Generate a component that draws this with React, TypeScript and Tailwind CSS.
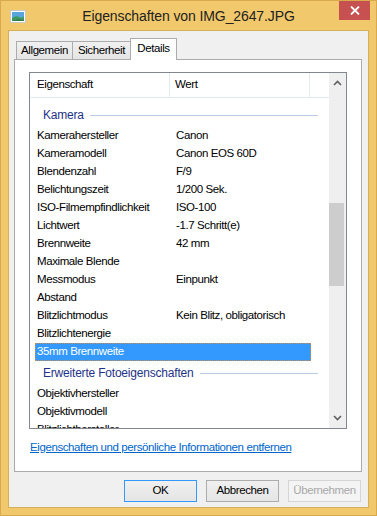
import React from "react";

const FONT = { fontFamily: '"Liberation Sans", Arial, sans-serif' };

type Row = { k: string; v?: string; selected?: boolean };

const KAMERA: Row[] = [
  { k: "Kamerahersteller", v: "Canon" },
  { k: "Kameramodell", v: "Canon EOS 60D" },
  { k: "Blendenzahl", v: "F/9" },
  { k: "Belichtungszeit", v: "1/200 Sek." },
  { k: "ISO-Filmempfindlichkeit", v: "ISO-100" },
  { k: "Lichtwert", v: "-1.7 Schritt(e)" },
  { k: "Brennweite", v: "42 mm" },
  { k: "Maximale Blende" },
  { k: "Messmodus", v: "Einpunkt" },
  { k: "Abstand" },
  { k: "Blitzlichtmodus", v: "Kein Blitz, obligatorisch" },
  { k: "Blitzlichtenergie" },
  { k: "35mm Brennweite", selected: true },
];

const FOTO: Row[] = [
  { k: "Objektivhersteller" },
  { k: "Objektivmodell" },
  { k: "Blitzlichthersteller" },
];

function PropRow({ r }: { r: Row }) {
  return (
    <div
      className={
        "ml-[5px] w-[276px] h-[18px] grid grid-cols-[139px_1fr] items-center leading-none " +
        (r.selected ? "bg-[#3399ff] text-white border border-dotted border-[#d08a4a]" : "text-black")
      }
    >
      <span className={(r.selected ? "pl-[1px]" : "pl-[2px]") + " whitespace-nowrap"}>{r.k}</span>
      <span className="pl-[2px] whitespace-nowrap">{r.v ?? ""}</span>
    </div>
  );
}

function Group({ title }: { title: string }) {
  return (
    <div className="ml-[5px] mr-[11px] h-[24px] flex items-center pl-[8px]">
      <span className="text-[#1e3287] text-[12px] tracking-[-0.2px] whitespace-nowrap">{title}</span>
      <span className="flex-1 ml-[6px] h-px bg-[#b8cbe6]" />
    </div>
  );
}

function Chevron({ up }: { up?: boolean }) {
  return (
    <svg width="9" height="6" viewBox="0 0 9 6">
      <path
        d={up ? "M1 5 L4.5 1.5 L8 5" : "M1 1 L4.5 4.5 L8 1"}
        fill="none"
        stroke="#606060"
        strokeWidth="1.6"
      />
    </svg>
  );
}

function Button({ label, primary, disabled }: { label: string; primary?: boolean; disabled?: boolean }) {
  return (
    <div
      className={
        "w-[73px] h-[22px] flex items-center justify-center border " +
        (disabled
          ? "border-[#d5d5d5] bg-[#f4f4f4] text-[#a8a8a8]"
          : primary
          ? "border-[#3399ff] bg-gradient-to-b from-[#f0f0f0] to-[#e5e5e5] text-black"
          : "border-[#acacac] bg-gradient-to-b from-[#f0f0f0] to-[#e5e5e5] text-black")
      }
    >
      {label}
    </div>
  );
}

export default function App() {
  return (
    <div
      className="w-[377px] h-[516px] bg-[#f1c86b] border border-[#d9aa4c] flex flex-col text-[11.5px] tracking-[-0.4px] overflow-hidden"
      style={FONT}
    >
      {/* title bar */}
      <div className="relative h-[29px] flex items-center justify-center">
        <svg className="absolute left-[9px] top-[9px]" width="16" height="13" viewBox="0 0 16 13">
          <rect x="0.5" y="0.5" width="15" height="12" fill="#fff" stroke="#c9c9c9" />
          <rect x="2" y="2" width="12" height="9" fill="#5aa6dc" />
          <path d="M2 8 Q6 5 9 7 T14 6 V11 H2 Z" fill="#3f9a62" />
          <path d="M2 11 Q7 8 14 10 V11 Z" fill="#2e7a4a" />
        </svg>
        <span className="text-[14px] tracking-[-0.1px] text-[#222] mt-[1px]">Eigenschaften von IMG_2647.JPG</span>
        <div className="absolute right-[6px] top-[-1px] w-[31px] h-[20px] bg-[#c75050] flex items-center justify-center">
          <svg width="10" height="9" viewBox="0 0 10 9">
            <path d="M1 0.5 L9 8.5 M9 0.5 L1 8.5" stroke="#fff" strokeWidth="1.8" />
          </svg>
        </div>
      </div>

      {/* client area */}
      <div className="mx-[7px] mb-[7px] flex-1 bg-[#f0f0f0] border border-[#d4b057] flex flex-col pt-[7px]">
        {/* tabs */}
        <div className="flex items-end ml-[7px] h-[21px] relative z-10">
          <div className="w-[57px] h-[18px] border border-b-0 border-[#acacac] bg-gradient-to-b from-[#f0f0f0] to-[#e5e5e5] flex items-center justify-center">
            Allgemein
          </div>
          <div className="-ml-px w-[59px] h-[18px] border border-b-0 border-[#acacac] bg-gradient-to-b from-[#f0f0f0] to-[#e5e5e5] flex items-center justify-center">
            Sicherheit
          </div>
          <div className="-ml-px w-[47px] h-[22px] -mb-px border border-b-0 border-[#acacac] bg-white flex items-center justify-center pb-[2px]">
            Details
          </div>
        </div>

        {/* tab panel */}
        <div className="ml-[5px] w-[348px] h-[413px] bg-white border border-[#acacac] flex flex-col">
          <div className="mt-[12px] ml-[14px] w-[318px] h-[357px] border border-[#828790] flex overflow-hidden">
            <div className="flex-1 flex flex-col overflow-hidden">
              {/* header */}
              <div className="h-[25px] flex border-b border-[#e2e9f1] relative z-10 bg-white">
                <div className="w-[140px] pl-[7px] flex items-center border-r border-[#e2e9f1]">Eigenschaft</div>
                <div className="w-[140px] pl-[5px] flex items-center border-r border-[#e2e9f1]">Wert</div>
                <div className="flex-1" />
              </div>
              {/* rows */}
              <div className="flex-1 overflow-hidden">
                <div className="-mt-[15px]">
                  <PropRow r={{ k: "Komprimierte Bits/Pixel" }} />
                  <div className="h-[2px]" />
                  <Group title="Kamera" />
                  {KAMERA.map((r) => (
                    <PropRow key={r.k} r={r} />
                  ))}
                  <Group title="Erweiterte Fotoeigenschaften" />
                  {FOTO.map((r) => (
                    <PropRow key={r.k} r={r} />
                  ))}
                </div>
              </div>
            </div>
            {/* scrollbar */}
            <div className="w-[17px] bg-[#efefef] flex flex-col">
              <div className="h-[17px] flex items-center justify-center pt-[3px]">
                <Chevron up />
              </div>
              <div className="flex-1">
                <div className="mt-[113px] w-[15px] h-[83px] bg-[#cdcdcd]" />
              </div>
              <div className="h-[17px] flex items-center justify-center pb-[3px]">
                <Chevron />
              </div>
            </div>
          </div>

          <div className="mt-[11px] ml-[15px] text-[#0066cc] underline leading-[14px] whitespace-nowrap">
            Eigenschaften und persönliche Informationen entfernen
          </div>
        </div>

        {/* buttons */}
        <div className="mt-[8px] mr-[7px] flex justify-end gap-[9px]">
          <Button label="OK" primary />
          <Button label="Abbrechen" />
          <Button label="Übernehmen" disabled />
        </div>
      </div>
    </div>
  );
}
